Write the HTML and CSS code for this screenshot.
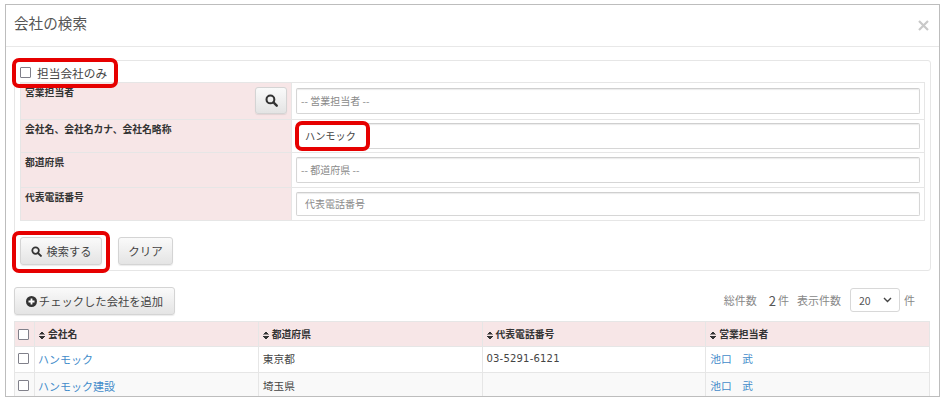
FILE: index.html
```html
<!DOCTYPE html>
<html lang="ja">
<head>
<meta charset="utf-8">
<title>会社の検索</title>
<link rel="stylesheet" href="styles.css">
</head>
<body>
<div class="modal">
  <header class="modal-head">
    <h1>会社の検索</h1>
    <svg class="close" width="11" height="11" viewBox="0 0 11 11"><path d="M1 1l9 9M10 1l-9 9" stroke="#c9c9c9" stroke-width="2.2" fill="none"/></svg>
  </header>
  <div class="modal-body">
    <section class="panel">
      <label class="only"><span class="cb dark"></span>担当会社のみ</label>
      <table class="form">
        <tr class="r1">
          <th><div class="th-in"><span>営業担当者</span><span class="btn icon-btn"><svg width="13" height="13" viewBox="0 0 12 12"><circle cx="5" cy="5" r="3.6" fill="none" stroke="#333" stroke-width="1.9"/><path d="M7.8 7.8l3 3" stroke="#333" stroke-width="2.2" stroke-linecap="round"/></svg></span></div></th>
          <td><div class="input ph">-- 営業担当者 --</div></td>
        </tr>
        <tr class="r2">
          <th>会社名、会社名カナ、会社名略称</th>
          <td><div class="input val">ハンモック</div></td>
        </tr>
        <tr class="r3">
          <th>都道府県</th>
          <td><div class="input ph">-- 都道府県 --</div></td>
        </tr>
        <tr class="r4">
          <th>代表電話番号</th>
          <td><div class="input ph tel">代表電話番号</div></td>
        </tr>
      </table>
      <div class="actions">
        <span class="btn search"><svg width="11" height="11" viewBox="0 0 12 12"><circle cx="5" cy="5" r="3.6" fill="none" stroke="#333" stroke-width="1.9"/><path d="M7.8 7.8l3 3" stroke="#333" stroke-width="2.2" stroke-linecap="round"/></svg>検索する</span>
        <span class="btn clear">クリア</span>
      </div>
      <i class="mark mark-check"></i>
      <i class="mark mark-input"></i>
      <i class="mark mark-search"></i>
    </section>
    <div class="tools">
      <span class="btn add"><svg width="11" height="11" viewBox="0 0 11 11"><circle cx="5.5" cy="5.5" r="5.5" fill="#333"/><path d="M5.5 2.5v6M2.5 5.5h6" stroke="#fff" stroke-width="1.8"/></svg>チェックした会社を追加</span>
      <div class="paging">
        <span>総件数</span><span class="count">2</span><span class="unit">件</span><span class="show">表示件数</span>
        <span class="select">20<svg width="9" height="6" viewBox="0 0 9 6"><path d="M1 1l3.5 3.5L8 1" fill="none" stroke="#444" stroke-width="1.4"/></svg></span>
        <span>件</span>
      </div>
    </div>
    <table class="list">
      <colgroup><col class="c0"><col class="c1"><col class="c1"><col class="c1"><col class="c1"></colgroup>
      <thead>
        <tr>
          <th><span class="cb dark"></span></th>
          <th><i class="sort"></i>会社名</th>
          <th><i class="sort"></i>都道府県</th>
          <th><i class="sort"></i>代表電話番号</th>
          <th><i class="sort"></i>営業担当者</th>
        </tr>
      </thead>
      <tbody>
        <tr>
          <td><span class="cb dark"></span></td>
          <td class="name"><a href="#">ハンモック</a></td>
          <td>東京都</td>
          <td class="num">03-5291-6121</td>
          <td><a href="#">池口　武</a></td>
        </tr>
        <tr class="alt">
          <td><span class="cb dark"></span></td>
          <td class="name"><a href="#">ハンモック建設</a></td>
          <td>埼玉県</td>
          <td></td>
          <td><a href="#">池口　武</a></td>
        </tr>
      </tbody>
    </table>
  </div>
</div>
</body>
</html>
```

FILE: styles.css
```css
* { box-sizing: border-box; }
html, body { height: 403px; overflow: hidden; }
body {
  margin: 0;
  padding: 4px 7px 6px 5px;
  background: #fff;
  font-family: "Noto Sans CJK JP", "Noto Sans", sans-serif;
  color: #444;
}
.modal {
  height: 393px;
  border: 1px solid #bdbdbd;
  overflow: hidden;
  background: #fff;
}
.modal-head {
  height: 42px;
  border-bottom: 1px solid #e8e8e8;
  display: flex;
  align-items: flex-start;
  justify-content: space-between;
  padding: 8px 10px 0 8px;
}
.modal-head h1 {
  margin: 0;
  font-size: 14.6px;
  line-height: 20px;
  font-weight: 400;
  color: #555;
}
.close { margin-top: 7px; }
.modal-body { padding: 13px 8px 0 8px; }
.panel {
  position: relative;
  height: 211px;
  border: 1px solid #e6e6e6;
  border-radius: 3px;
  padding: 0 5px;
}
.only {
  display: flex;
  align-items: center;
  height: 21px;
  padding-top: 2px;
  font-size: 11.7px;
  color: #444;
}
.cb {
  display: inline-block;
  width: 11px;
  height: 11px;
  border: 1px solid #77777f;
  border-radius: 1px;
  background: #fff;
}
.only .cb { margin-right: 6px; }
.cb.dark { border: 1.5px solid #80808a; }
.form {
  width: 905px;
  height: 138px;
  border-collapse: collapse;
  table-layout: fixed;
}
.form th, .form td { border: 1px solid #e6e6e6; padding: 0; }
.form th {
  width: 271px;
  background: #f7e6e7;
  vertical-align: top;
  text-align: left;
  padding: 2px 4px;
  font-size: 9.8px;
  line-height: 14px;
  font-weight: 700;
  color: #333;
}
.form td { padding: 0 4px; }
.r1 { height: 37px; }
.r2 { height: 33px; }
.r3 { height: 35px; }
.r4 { height: 33px; }
.th-in { display: flex; justify-content: space-between; }
.btn {
  display: inline-flex;
  align-items: center;
  justify-content: center;
  background: linear-gradient(#fafafa, #e4e4e4);
  border: 1px solid #d4d4d4;
  border-radius: 3px;
  color: #444;
  font-weight: 400;
  box-shadow: 0 1px 1px rgba(0,0,0,.08);
}
.icon-btn { width: 32px; height: 27px; margin-top: 2px; }
.input {
  height: 26px;
  border: 1px solid #d6d6d6;
  border-top-color: #cfcfcf;
  border-radius: 2px;
  box-shadow: inset 0 1px 1px rgba(0,0,0,.08);
  display: flex;
  align-items: center;
  padding: 0 0 2px 4px;
  font-size: 10px;
  color: #444;
}
.input.ph { color: #8a8a8a; }
.input.tel { padding-left: 8px; height: 24px; }
.input.val { padding-left: 8px; font-size: 10.2px; }
.actions { display: flex; gap: 16px; margin-top: 16px; }
.search { width: 82px; height: 28px; font-size: 11.2px; gap: 5px; }
.clear { width: 55px; height: 28px; font-size: 11.5px; }
.mark {
  position: absolute;
  border: 4px solid #e60000;
  border-radius: 7px;
  pointer-events: none;
}
.mark-check { left: -3px; top: -3px; width: 106px; height: 30px; }
.mark-input { left: 280px; top: 60px; width: 75px; height: 30px; }
.mark-search { left: -3px; top: 170px; width: 98px; height: 42px; }
.tools {
  display: flex;
  justify-content: space-between;
  align-items: flex-start;
  margin-top: 16px;
  height: 34px;
}
.add { width: 161px; height: 28px; font-size: 11.3px; gap: 2px; }
.paging {
  display: flex;
  align-items: center;
  height: 26px;
  padding-right: 16px;
  font-size: 11px;
  color: #888;
}
.count { margin-left: 12px; color: #555; font-size: 13px; }
.unit { margin-left: 2px; }
.show { margin-left: 8px; }
.select {
  width: 50px;
  height: 24px;
  margin: 0 4px 0 9px;
  border: 1px solid #d8d8d8;
  border-radius: 3px;
  display: flex;
  align-items: center;
  justify-content: space-between;
  padding: 0 7px 0 8px;
  color: #555;
  font-size: 10.5px;
}
.list {
  width: 916px;
  border-collapse: collapse;
  table-layout: fixed;
  font-size: 10.7px;
}
.c0 { width: 20px; }
.list th, .list td {
  border: 1px solid #e6e6e6;
  padding: 0 4px;
  text-align: left;
  white-space: nowrap;
}
.list th {
  height: 25px;
  background: #f7e6e7;
  font-size: 9.8px;
  font-weight: 700;
  color: #333;
}
.list td { height: 26px; color: #444; }
.list tbody tr:first-child td { padding-bottom: 2px; }
.list th:first-child, .list td:first-child { padding: 0 0 0 3px; line-height: 0; }
.alt td { background: #f9f9f9; }
.list .name { font-size: 11px; padding-left: 3px; }
.num { font-family: "DejaVu Sans", sans-serif; font-size: 10px; letter-spacing: .2px; }
a { color: #428bca; text-decoration: none; }
.sort {
  display: inline-block;
  width: 6px;
  height: 8px;
  margin-right: 3px;
  vertical-align: -1px;
  background:
    linear-gradient(to bottom right, transparent 50%, #333 50%) 0 0 / 50% 3.5px no-repeat,
    linear-gradient(to bottom left, transparent 50%, #333 50%) 100% 0 / 50% 3.5px no-repeat,
    linear-gradient(to top right, transparent 50%, #333 50%) 0 100% / 50% 3.5px no-repeat,
    linear-gradient(to top left, transparent 50%, #333 50%) 100% 100% / 50% 3.5px no-repeat;
}
```
